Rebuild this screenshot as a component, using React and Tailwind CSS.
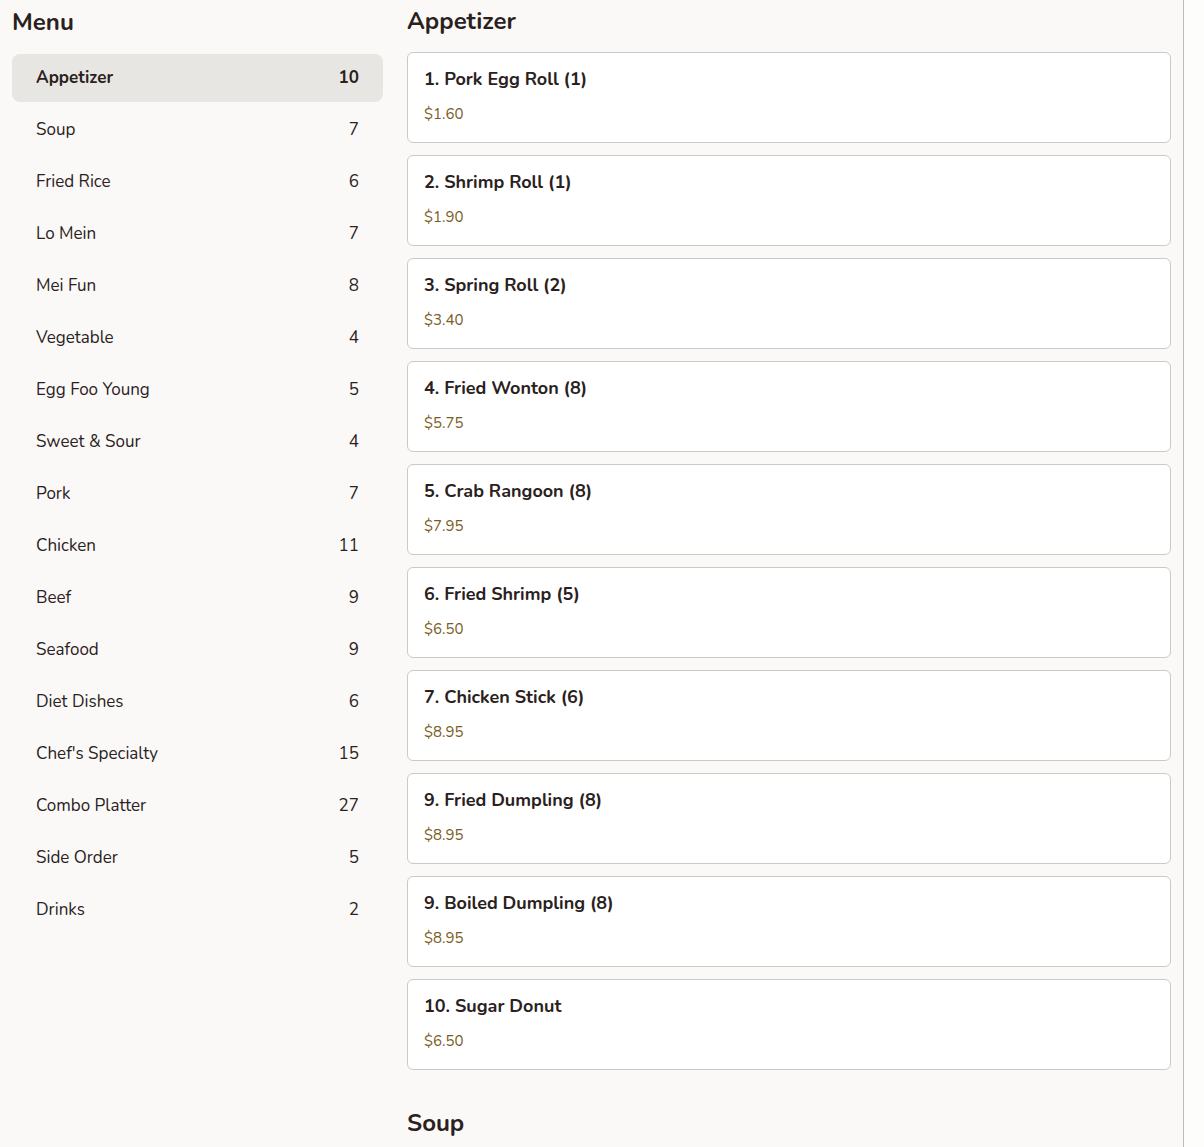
import React from 'react';

const categories = [
  ['Appetizer', 10],
  ['Soup', 7],
  ['Fried Rice', 6],
  ['Lo Mein', 7],
  ['Mei Fun', 8],
  ['Vegetable', 4],
  ['Egg Foo Young', 5],
  ['Sweet & Sour', 4],
  ['Pork', 7],
  ['Chicken', 11],
  ['Beef', 9],
  ['Seafood', 9],
  ['Diet Dishes', 6],
  ["Chef's Specialty", 15],
  ['Combo Platter', 27],
  ['Side Order', 5],
  ['Drinks', 2],
];

const sections = [
  {
    name: 'Appetizer',
    items: [
      ['1. Pork Egg Roll (1)', '$1.60'],
      ['2. Shrimp Roll (1)', '$1.90'],
      ['3. Spring Roll (2)', '$3.40'],
      ['4. Fried Wonton (8)', '$5.75'],
      ['5. Crab Rangoon (8)', '$7.95'],
      ['6. Fried Shrimp (5)', '$6.50'],
      ['7. Chicken Stick (6)', '$8.95'],
      ['9. Fried Dumpling (8)', '$8.95'],
      ['9. Boiled Dumpling (8)', '$8.95'],
      ['10. Sugar Donut', '$6.50'],
    ],
  },
  {
    name: 'Soup',
    items: [
      ['11. Wonton Soup', '$3.25'],
      ['12. Egg Drop Soup', '$3.25'],
      ['13. Hot & Sour Soup', '$3.50'],
      ['14. Chicken Noodle Soup', '$3.25'],
      ['15. Chicken Rice Soup', '$3.25'],
      ['16. Vegetable Tofu Soup', '$4.50'],
      ['17. House Special Soup', '$7.95'],
    ],
  },
];

export default function App() {
  return (
    <div
      className="min-h-screen bg-[#fdfdfc] text-[#2a211d]"
      style={{ fontFamily: 'Nunito, Lato, "Noto Sans", sans-serif' }}
    >
      <div className="flex gap-6 px-3 w-[1184px] min-h-screen bg-[#faf9f7] border-r border-[#bdbbb9]">
        <aside className="w-[371px] shrink-0">
          <h2 className="text-[24px] font-bold leading-[32px] pt-[6px] mb-[16px]">Menu</h2>
          <ul className="flex flex-col gap-1">
            {categories.map(([name, count], i) => (
              <li
                key={name}
                className={
                  'flex items-center justify-between h-12 px-6 rounded-lg text-[17px] ' +
                  (i === 0 ? 'bg-[#e8e6e3] font-bold' : '')
                }
              >
                <span>{name}</span>
                <span>{count}</span>
              </li>
            ))}
          </ul>
        </aside>

        <main className="flex-1 flex flex-col gap-8">
          {sections.map((s) => (
            <section key={s.name}>
              <h2 className="text-[24px] font-bold leading-[32px] pt-[5px] mb-[15px]">{s.name}</h2>
              <div className="flex flex-col gap-3">
                {s.items.map(([title, price]) => (
                  <div
                    key={title}
                    className="bg-white border border-[#cdc9c4] rounded-md h-[91px] px-4 pt-[14px]"
                  >
                    <div className="text-[18px] font-bold leading-6">{title}</div>
                    <div className="text-[15px] text-[#7a5d24] mt-[12px]">{price}</div>
                  </div>
                ))}
              </div>
            </section>
          ))}
        </main>
      </div>
    </div>
  );
}
